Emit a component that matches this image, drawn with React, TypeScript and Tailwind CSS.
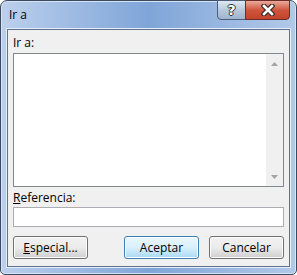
function Btn({ label, accel, rest, primary }: { label?: string; accel?: string; rest?: string; primary?: boolean }) {
  return (
    <button
      type="button"
      className={
        'h-[23px] w-[75px] rounded-[3px] border text-[12px] text-black ' +
        (primary
          ? 'border-[#3c7fb1] bg-gradient-to-b from-[#eaf6fd] via-[#d9f0fc] to-[#a7d9f5] shadow-[inset_0_0_0_1px_#fff]'
          : 'border-[#707070] bg-gradient-to-b from-[#f2f2f2] via-[#ebebeb] to-[#cfcfcf] shadow-[inset_0_0_0_1px_#fcfcfc]')
      }
    >
      {accel ? (
        <>
          <span className="underline">{accel}</span>
          {rest}
        </>
      ) : (
        label
      )}
    </button>
  )
}

function Arrow({ up }: { up?: boolean }) {
  return (
    <svg width="7" height="4" viewBox="0 0 7 4">
      <path d={up ? 'M0 4 L3.5 0 L7 4 Z' : 'M0 0 L3.5 4 L7 0 Z'} fill="#a3a3a3" />
    </svg>
  )
}

export default function App() {
  return (
    <div className="h-[275px] w-[297px] bg-white font-['Open_Sans','DejaVu_Sans',sans-serif]">
      <div className="flex h-full flex-col rounded-t-[7px] rounded-b-[5px] border border-[#3b4a5e] bg-gradient-to-r from-[#bcd0ec] via-[#7fa5d8] to-[#b2c9e8] px-[6px] pb-[7px] shadow-[inset_0_0_0_1px_#d7e4f5]">
        <div className="flex h-[28px] shrink-0 items-start justify-between">
          <span className="mt-[8px] ml-[2px] text-[12px] leading-none text-black">Ir a</span>
          <div className="-mt-px flex">
            <div className="flex h-[20px] w-[29px] items-center justify-center rounded-bl-[4px] border border-[#4d5e78] bg-gradient-to-b from-[#dfe8f3] via-[#b8c8dd] to-[#9eb3cf] font-['DejaVu_Sans',sans-serif] text-[14px] font-bold leading-none text-white [text-shadow:1px_0_0_#2a3242,-1px_0_0_#2a3242,0_1px_0_#2a3242,0_-1px_0_#2a3242]">
              ?
            </div>
            <div className="-ml-px flex h-[20px] w-[45px] items-center justify-center rounded-br-[4px] border border-[#6b2d25] bg-gradient-to-b from-[#e9a99c] via-[#d0543d] to-[#c2432c]">
              <svg width="14" height="12" viewBox="0 0 14 12">
                <path d="M3 2 L11 10 M11 2 L3 10" stroke="#3a2a28" strokeWidth="5" strokeLinecap="square" />
                <path d="M3 2 L11 10 M11 2 L3 10" stroke="#fff" strokeWidth="2.6" strokeLinecap="square" />
              </svg>
            </div>
          </div>
        </div>
        <div className="flex flex-1 flex-col border border-[#5f7190] bg-[#f0f0f0] px-[5px] shadow-[0_0_0_1px_#e6eef8]">
          <span className="mt-[5px] text-[12px] leading-[15px] text-black">Ir a:</span>
          <div className="mt-[3px] flex h-[134px] border border-[#828790] bg-white">
            <div className="flex-1" />
            <div className="flex w-[17px] flex-col items-center justify-between bg-[#f0f0f0] pt-[8px] pb-[7px]">
              <Arrow up />
              <Arrow />
            </div>
          </div>
          <span className="mt-[3px] text-[12px] leading-[15px] text-black">
            <span className="underline">R</span>eferencia:
          </span>
          <div className="mt-[2px] h-[20px] border border-[#abadb3] bg-white" />
          <div className="mt-[9px] flex items-center">
            <Btn accel="E" rest="special..." />
            <div className="flex-1" />
            <Btn label="Aceptar" primary />
            <div className="w-[10px]" />
            <Btn label="Cancelar" />
          </div>
        </div>
      </div>
    </div>
  )
}
